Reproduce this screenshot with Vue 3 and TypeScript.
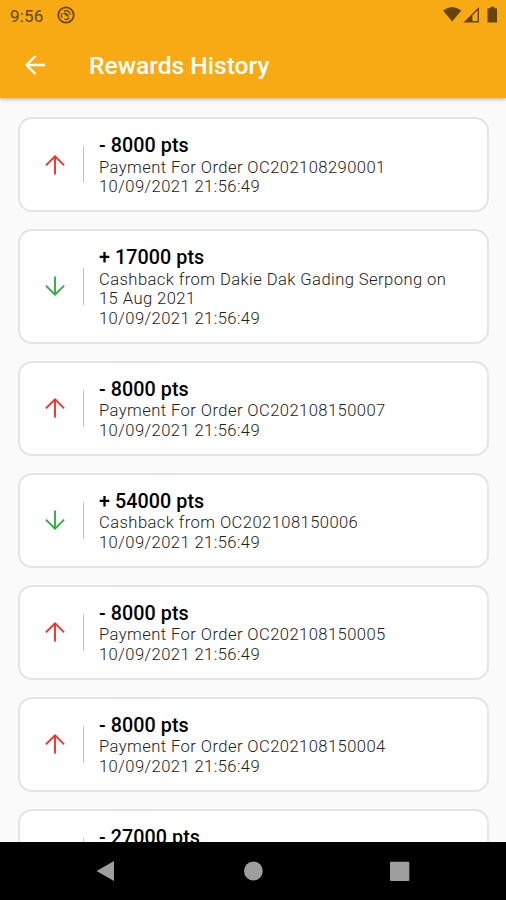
<script setup lang="ts">
interface Reward {
  id: number
  points: number
  description: string
  date: string
}

const date = '10/09/2021 21:56:49'
const rewards: Reward[] = [
  { id: 1, points: -8000, description: 'Payment For Order OC202108290001', date },
  { id: 2, points: 17000, description: 'Cashback from Dakie Dak Gading Serpong on 15 Aug 2021', date },
  { id: 3, points: -8000, description: 'Payment For Order OC202108150007', date },
  { id: 4, points: 54000, description: 'Cashback from OC202108150006', date },
  { id: 5, points: -8000, description: 'Payment For Order OC202108150005', date },
  { id: 6, points: -8000, description: 'Payment For Order OC202108150004', date },
  { id: 7, points: -27000, description: '', date: '' },
]

const label = (points: number): string => `${points < 0 ? '-' : '+'} ${Math.abs(points)} pts`
</script>

<template>
  <div class="screen">
    <header class="top">
      <div class="status">
        <span class="clock">9:56</span>
        <svg class="notice" viewBox="0 0 18 18">
          <circle cx="9" cy="9" r="7.7" fill="none" stroke="currentColor" stroke-width="1.8" />
          <path d="M5.300 11.800A4.500 4.500 0 0 1 4.900 7.200M6.800 5.100A4.500 4.500 0 0 1 13.300 8.600M12.400 11.900A4.500 4.500 0 0 1 7.500 13.200" fill="none" stroke="currentColor" stroke-width="1.300" />
          <path d="M5.800 7.200L8.600 6.500L11.300 8.400L11.800 11.400L9.200 9.800Z" fill="currentColor" />
        </svg>
        <svg class="system" viewBox="0 0 56 18">
          <path d="M0 4.600Q9.200 -2.400 18.400 4.600L9.200 15.600Z" fill="currentColor" />
          <path d="M20.500 16.400L36 1V16.400Z" fill="currentColor" />
          <path d="M29.400 9.500L34.600 4.300V15H29.400Z" class="signal-gap" />
          <path d="M45.500 2.300H47.600V.8H51.300V2.300H54V16.400H44.500V2.300Z" fill="currentColor" />
        </svg>
      </div>
      <div class="bar">
        <svg class="back" viewBox="0 0 20 20">
          <path d="M20 10H1.800M10.500 1L1.500 10L10.500 19" fill="none" stroke="#fff" stroke-width="2.300" />
        </svg>
        <h1>Rewards History</h1>
      </div>
    </header>

    <main class="list">
      <article v-for="reward in rewards" :key="reward.id" class="card">
        <svg class="arrow" :class="reward.points < 0 ? 'spent' : 'earned'" viewBox="0 0 20 20">
          <path d="M10 19.500V1.500M.9 10.400L10 1.300L19.100 10.400" fill="none" stroke="currentColor" stroke-width="1.900" />
        </svg>
        <span class="divider"></span>
        <div class="details">
          <h2>{{ label(reward.points) }}</h2>
          <p>{{ reward.description }}</p>
          <p>{{ reward.date }}</p>
        </div>
      </article>
    </main>

    <nav class="navigation">
      <svg viewBox="0 0 22 22"><path d="M1.500 11L19 1V21Z" fill="#9e9e9e" /></svg>
      <svg viewBox="0 0 22 22"><circle cx="11.400" cy="11" r="9.400" fill="#9e9e9e" /></svg>
      <svg viewBox="0 0 22 22"><rect x="1" y="1.700" width="19.300" height="19.200" rx="1" fill="#9e9e9e" /></svg>
    </nav>
  </div>
</template>

<style>
body {
  margin: 0;
}
</style>

<style scoped>
.screen {
  display: flex;
  flex-direction: column;
  width: 506px;
  height: 900px;
  overflow: hidden;
  background: #fafafa;
  font-family: Roboto, sans-serif;
}

.top {
  position: relative;
  z-index: 1;
  flex: none;
  height: 98px;
  background: #f8aa14;
  box-shadow: 0 1px 4px rgba(0, 0, 0, 0.32);
}

.status {
  display: flex;
  align-items: center;
  height: 30px;
  padding: 0 7px 0 10px;
  color: #674509;
}

.clock {
  width: 47px;
  padding-top: 2px;
  font-size: 17px;
  letter-spacing: 0.2px;
}

.notice {
  width: 18px;
  height: 18px;
}

.system {
  width: 56px;
  height: 18px;
  margin-left: auto;
}

.signal-gap {
  fill: #f8aa14;
}

.bar {
  display: flex;
  align-items: center;
  height: 69px;
  padding-left: 25px;
}

.back {
  width: 20px;
  height: 20px;
}

h1 {
  margin: 2px 0 0 44px;
  color: #fff;
  font-size: 24.6px;
  font-weight: 500;
  line-height: 30px;
}

.list {
  display: flex;
  flex: 1;
  flex-direction: column;
  gap: 17px;
  min-height: 0;
  padding: 19.2px 17px 0 18px;
  overflow: hidden;
}

.card {
  display: flex;
  flex: none;
  align-items: center;
  box-sizing: border-box;
  padding: 14px 28px 14px 25px;
  border: 2px solid #e4e4e4;
  border-radius: 14px;
  background: #fff;
}

.arrow {
  flex: none;
  width: 20px;
  height: 20px;
}

.spent {
  color: #f0342b;
}

.earned {
  color: #34ad42;
  transform: rotate(180deg);
}

.divider {
  flex: none;
  width: 1px;
  height: 37px;
  margin: 0 15px 0 18px;
  background: #c4c4c4;
}

.details {
  min-width: 0;
  margin: 0.6px 0 -0.6px;
}

h2 {
  margin: 0;
  padding-top: 1.4px;
  color: #000;
  font-size: 19.7px;
  font-weight: 500;
  line-height: 22.6px;
  letter-spacing: 0.08px;
}

p {
  min-height: 19.5px;
  margin: 0;
  color: #222;
  font-size: 16.6px;
  font-weight: 300;
  line-height: 19.5px;
  letter-spacing: 0.42px;
}

.navigation {
  display: flex;
  flex: none;
  align-items: center;
  justify-content: space-between;
  box-sizing: border-box;
  height: 58px;
  padding: 0 95px;
  background: #000;
}

.navigation svg {
  width: 22px;
  height: 22px;
}
</style>
